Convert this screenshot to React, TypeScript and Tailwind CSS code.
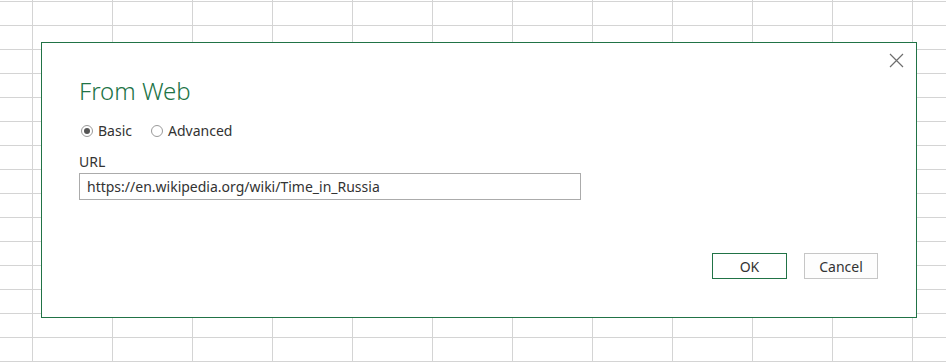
import React from "react";

const font = { fontFamily: '"Noto Sans", "Open Sans", sans-serif' };

function Radio({ checked, label }: { checked?: boolean; label: string }) {
  return (
    <label className="flex items-center gap-[5px] text-[14px] text-[#333]">
      <span className="flex h-[12px] w-[12px] items-center justify-center rounded-full border border-[#9a9a9a] bg-white">
        {checked && <span className="h-[6px] w-[6px] rounded-full bg-[#555]" />}
      </span>
      {label}
    </label>
  );
}

export default function App() {
  return (
    <div
      className="h-[362px] w-[946px] overflow-hidden bg-white bg-[linear-gradient(to_right,#d4d4d4_1px,transparent_1px),linear-gradient(to_bottom,#d4d4d4_1px,transparent_1px)] bg-[length:80px_24px] bg-[position:32px_1px] pl-[41px] pt-[42px]"
      style={font}
    >
      <div className="relative flex h-[276px] w-[876px] flex-col border border-[#217346] bg-white pl-[37px] pr-[38px]">
        <button className="absolute right-[12px] top-[9px] flex h-[16px] w-[16px] items-center justify-center text-[#6e6e6e]">
          <svg width="15" height="15" viewBox="0 0 15 15" fill="none" stroke="currentColor" strokeWidth="1.2">
            <path d="M1 1l13 13M14 1L1 14" />
          </svg>
        </button>

        <h1 className="mt-[32px] text-[24px] font-light leading-[32px] text-[#217346]">From Web</h1>

        <div className="mt-[13px] flex items-center gap-[19px] pl-[2px]">
          <Radio checked label="Basic" />
          <Radio label="Advanced" />
        </div>

        <div className="mt-[12px] text-[14px] leading-[18px] text-[#333]">URL</div>
        <div className="mt-[2px] flex h-[27px] w-[502px] items-center border border-[#ababab] px-[7px] text-[14px] text-[#333]">
          https://en.wikipedia.org/wiki/Time_in_Russia
        </div>

        <div className="mt-auto mb-[38px] flex justify-end gap-[17px]">
          <button className="h-[26px] w-[75px] border border-[#217346] bg-white text-[14px] text-[#333]">OK</button>
          <button className="h-[26px] w-[74px] border border-[#c6c6c6] bg-[#fdfdfd] text-[14px] text-[#333]">Cancel</button>
        </div>
      </div>
    </div>
  );
}
